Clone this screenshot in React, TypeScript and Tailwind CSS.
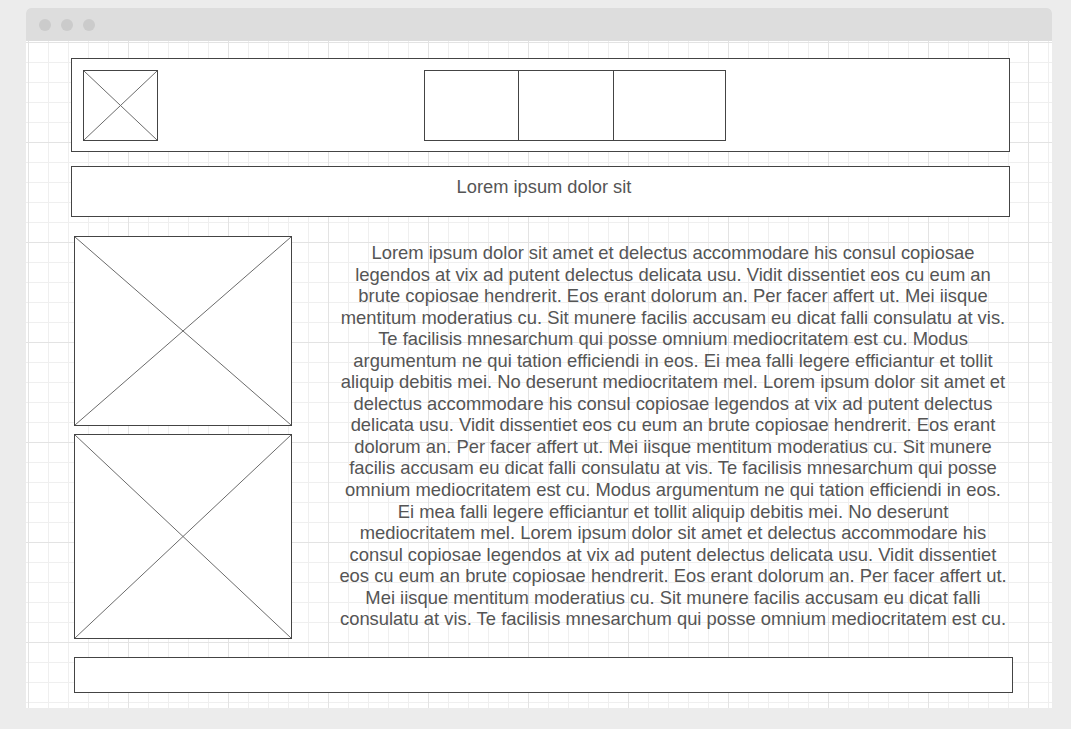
import React from "react";

const lines = [
  "Lorem ipsum dolor sit amet et delectus accommodare his consul copiosae",
  "legendos at vix ad putent delectus delicata usu. Vidit dissentiet eos cu eum an",
  "brute copiosae hendrerit. Eos erant dolorum an. Per facer affert ut. Mei iisque",
  "mentitum moderatius cu. Sit munere facilis accusam eu dicat falli consulatu at vis.",
  "Te facilisis mnesarchum qui posse omnium mediocritatem est cu. Modus",
  "argumentum ne qui tation efficiendi in eos. Ei mea falli legere efficiantur et tollit",
  "aliquip debitis mei. No deserunt mediocritatem mel. Lorem ipsum dolor sit amet et",
  "delectus accommodare his consul copiosae legendos at vix ad putent delectus",
  "delicata usu. Vidit dissentiet eos cu eum an brute copiosae hendrerit. Eos erant",
  "dolorum an. Per facer affert ut. Mei iisque mentitum moderatius cu. Sit munere",
  "facilis accusam eu dicat falli consulatu at vis. Te facilisis mnesarchum qui posse",
  "omnium mediocritatem est cu. Modus argumentum ne qui tation efficiendi in eos.",
  "Ei mea falli legere efficiantur et tollit aliquip debitis mei. No deserunt",
  "mediocritatem mel. Lorem ipsum dolor sit amet et delectus accommodare his",
  "consul copiosae legendos at vix ad putent delectus delicata usu. Vidit dissentiet",
  "eos cu eum an brute copiosae hendrerit. Eos erant dolorum an. Per facer affert ut.",
  "Mei iisque mentitum moderatius cu. Sit munere facilis accusam eu dicat falli",
  "consulatu at vis. Te facilisis mnesarchum qui posse omnium mediocritatem est cu.",
];

function Cross() {
  return (
    <svg className="absolute inset-0 h-full w-full" preserveAspectRatio="none" viewBox="0 0 100 100">
      <line x1="0" y1="0" x2="100" y2="100" stroke="#6b6b6b" strokeWidth="1" vectorEffect="non-scaling-stroke" />
      <line x1="100" y1="0" x2="0" y2="100" stroke="#6b6b6b" strokeWidth="1" vectorEffect="non-scaling-stroke" />
    </svg>
  );
}

export default function App() {
  return (
    <div className="w-[1071px] h-[729px] bg-[#ececec] pt-[8px] pl-[26px] font-['Liberation_Sans',Arial,sans-serif]">
      <div className="w-[1026px] h-[700px] flex flex-col rounded-t-[5px] overflow-hidden bg-white">
        <div className="h-[33px] shrink-0 bg-[#dddddd] flex items-center gap-[10px] pl-[13px]">
          <div className="w-[12px] h-[12px] rounded-full bg-[#cbcbcb]" />
          <div className="w-[12px] h-[12px] rounded-full bg-[#cbcbcb]" />
          <div className="w-[12px] h-[12px] rounded-full bg-[#cbcbcb]" />
        </div>
        <div className="flex-1 flex flex-col pl-[45px] pt-[17px] bg-white bg-[linear-gradient(to_right,#e3e3e3_1px,transparent_1px),linear-gradient(to_bottom,#e3e3e3_1px,transparent_1px),linear-gradient(to_right,#efefef_1px,transparent_1px),linear-gradient(to_bottom,#efefef_1px,transparent_1px)] bg-[size:100px_100px,100px_100px,20px_20px,20px_20px] bg-[position:2px_1px]">
          {/* header */}
          <div className="w-[939px] h-[94px] border border-[#444] bg-white flex items-start pt-[11px] pl-[11px]">
            <div className="relative w-[75px] h-[71px] border border-[#444]">
              <Cross />
            </div>
            <div className="ml-[266px] flex h-[71px]">
              <div className="w-[95px] h-full border border-[#444]" />
              <div className="w-[95px] h-full border-y border-r border-[#444]" />
              <div className="w-[112px] h-full border-y border-r border-[#444]" />
            </div>
          </div>
          {/* title */}
          <div className="mt-[14px] w-[939px] h-[51px] border border-[#444] bg-white flex items-center justify-center pb-[10px] pl-[7px] text-[18.3px] text-[#555]">
            Lorem ipsum dolor sit
          </div>
          {/* main */}
          <div className="mt-[19px] ml-[3px] flex items-start">
            <div className="w-[218px] flex flex-col gap-[8px]">
              <div className="relative w-[218px] h-[190px] border border-[#444] bg-white">
                <Cross />
              </div>
              <div className="relative w-[218px] h-[205px] border border-[#444] bg-white">
                <Cross />
              </div>
            </div>
            <div className="ml-[44px] w-[674px] pt-[6px] text-center text-[18.4px] leading-[21.55px] text-[#555]">
              {lines.map((l, i) => (
                <div key={i} className="whitespace-nowrap">{l}</div>
              ))}
            </div>
          </div>
          {/* footer */}
          <div className="mt-[18px] ml-[3px] w-[939px] h-[36px] border border-[#444] bg-white" />
        </div>
      </div>
    </div>
  );
}
